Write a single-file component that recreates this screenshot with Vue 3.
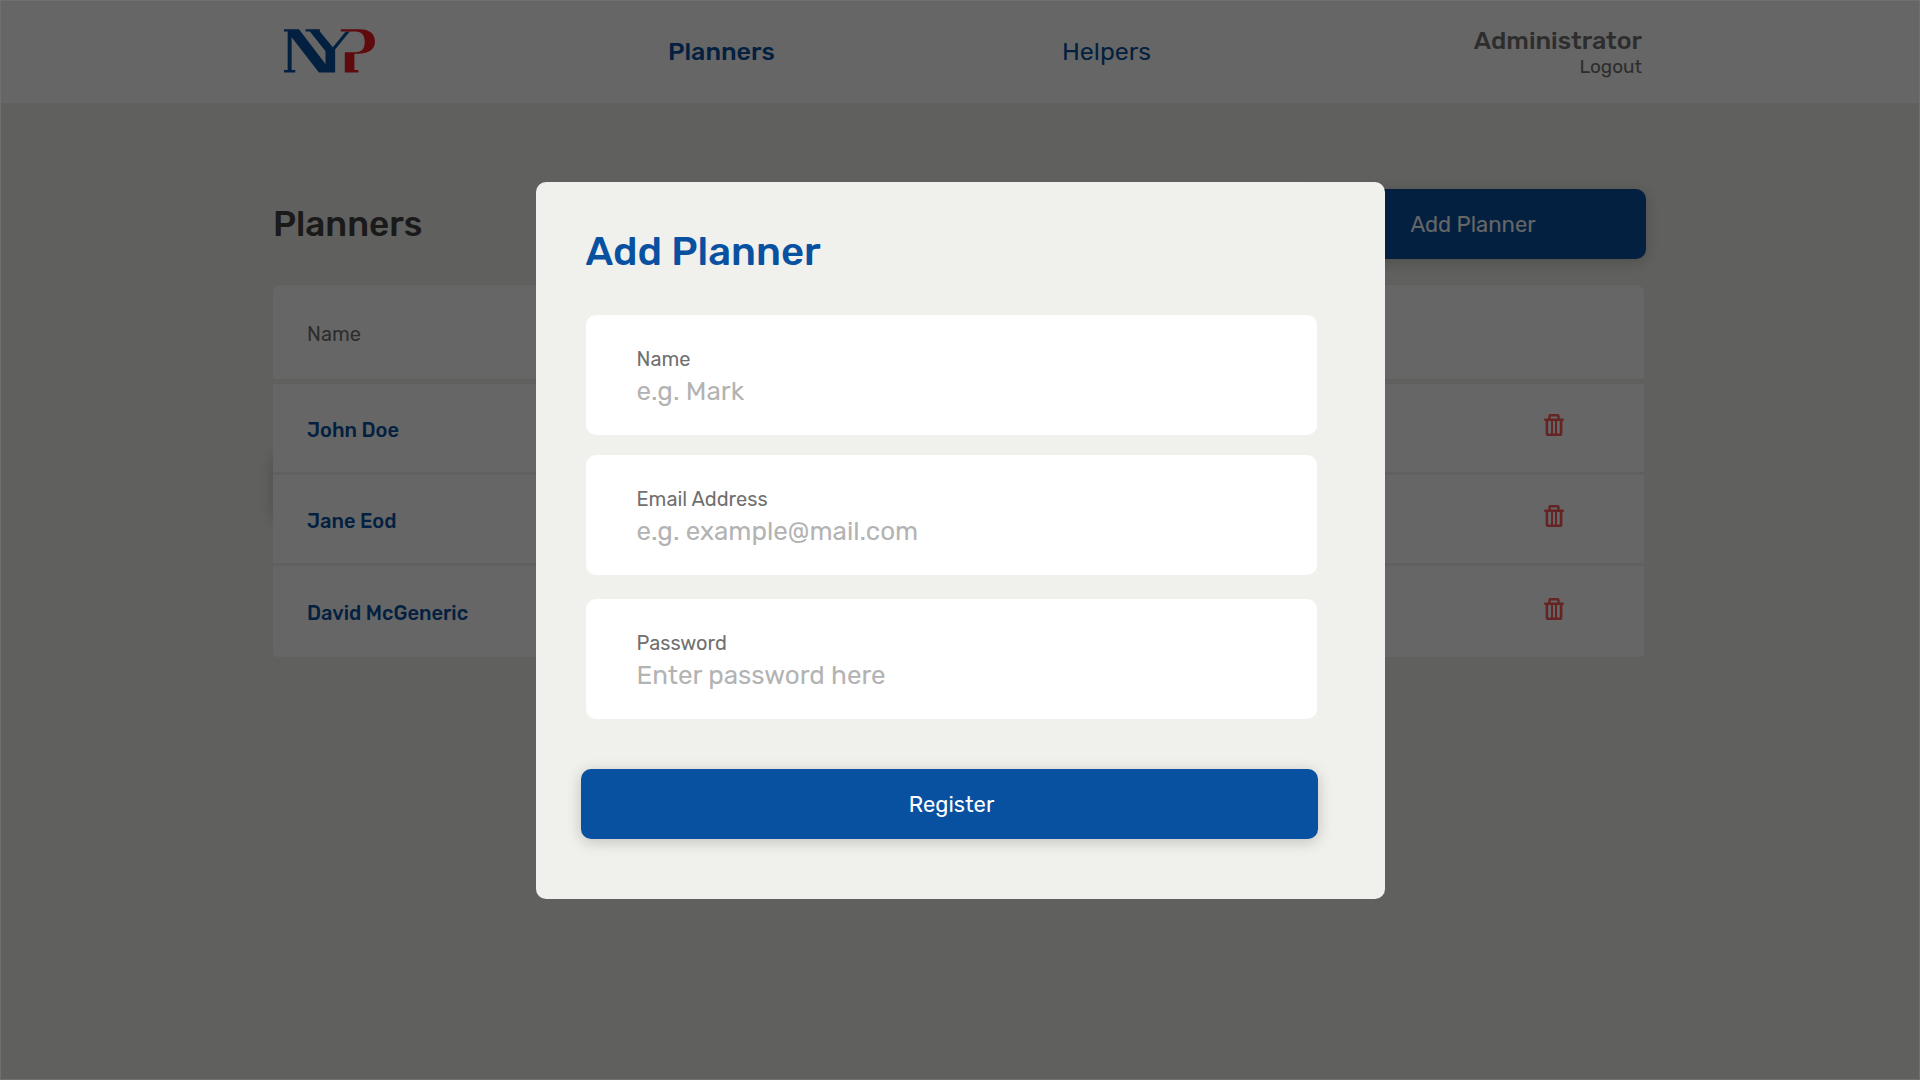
<script setup>
import { reactive } from 'vue'

const planners = ['John Doe', 'Jane Eod', 'David McGeneric']

const fields = [
  { id: 'name', label: 'Name', type: 'text', placeholder: 'e.g. Mark' },
  { id: 'email', label: 'Email Address', type: 'email', placeholder: 'e.g. example@mail.com' },
  { id: 'password', label: 'Password', type: 'password', placeholder: 'Enter password here' },
]

const form = reactive({ name: '', email: '', password: '' })
</script>

<template>
  <div class="page">
    <header class="topbar">
      <div class="container topbar-inner">
        <a class="logo" href="#" aria-label="NYP home">
          <svg viewBox="72 58 274 131" width="91" height="44" aria-hidden="true">
            <path
              fill="#0851a1"
              d="M72 58H117L197 163V124L150 65H137V58H180V65L219 112L258 65H270L226 119V188H177L95 82V181H106V188H72V181H83V65H72Z"
            />
            <path
              fill="#ed1c24"
              d="M243 58H300C330 58 346 72 346 96C346 120 325 132 295 132H284V181H296V188H255V127H288C305 127 315 118 315 96C315 75 305 65 288 65H243Z"
            />
          </svg>
        </a>
        <a class="nav-link active" href="#planners">Planners</a>
        <div class="nav-end">
          <a class="nav-link" href="#helpers">Helpers</a>
          <div class="account">
            <span class="role">Administrator</span>
            <a class="logout" href="#logout">Logout</a>
          </div>
        </div>
      </div>
    </header>

    <main class="container">
      <div class="heading">
        <h1>Planners</h1>
        <button class="primary add" type="button">Add Planner</button>
      </div>

      <div class="table-wrap">
        <table>
          <thead>
            <tr>
              <th scope="col">Name</th>
              <th></th>
            </tr>
          </thead>
          <tbody>
            <tr v-for="planner in planners" :key="planner">
              <td class="name">{{ planner }}</td>
              <td class="actions">
                <button class="delete" type="button" :aria-label="`Delete ${planner}`">
                  <svg viewBox="0 0 20 22" width="20" height="22" fill="none" stroke="currentColor" stroke-width="2.400" aria-hidden="true">
                    <path d="M1.200 5.800H18.800" stroke-linecap="round" />
                    <path d="M5.500 5.500V2.200Q5.500 1.200 6.500 1.200H13.500Q14.500 1.200 14.500 2.200V5.500" />
                    <path d="M2.900 6V19.800Q2.900 20.800 3.900 20.800H16.100Q17.100 20.800 17.100 19.800V6" stroke-width="2.600" />
                    <path d="M8 6V21M12 6V21" stroke-width="2" />
                  </svg>
                </button>
              </td>
            </tr>
          </tbody>
        </table>
      </div>
    </main>

    <div class="overlay">
      <section class="modal" role="dialog" aria-modal="true" aria-labelledby="modal-title">
        <h2 id="modal-title">Add Planner</h2>
        <form @submit.prevent>
          <div v-for="field in fields" :key="field.id" class="field">
            <label :for="field.id">{{ field.label }}</label>
            <input :id="field.id" v-model="form[field.id]" :type="field.type" :placeholder="field.placeholder" />
          </div>
          <button class="primary register" type="submit">Register</button>
        </form>
      </section>
    </div>
  </div>
</template>

<style>
body {
  margin: 0;
  background: #f0f0ec;
}
</style>

<style scoped>
.page {
  min-height: 100vh;
  background: #f0f0ec;
  color: #707070;
  font-family: Rubik, Roboto, sans-serif;
}

.page *,
.page *::before {
  box-sizing: border-box;
}

a {
  color: inherit;
  text-decoration: none;
}

button,
input {
  font-family: inherit;
}

.container {
  width: min(1374px, 100% - 32px);
  margin: 0 auto;
}

.topbar {
  background: #fff;
}

.topbar-inner {
  display: grid;
  grid-template-columns: 384fr 394fr 580fr;
  align-items: center;
  height: 103px;
  padding: 0 5px 0 11px;
}

.logo {
  padding-bottom: 1px;
}

.logo svg {
  display: block;
}

.nav-link {
  color: #0851a1;
  font-size: 25px;
  line-height: 32px;
}

.nav-link.active {
  padding-top: 1px;
  font-weight: 500;
}

.nav-end {
  display: flex;
  align-items: center;
  justify-content: space-between;
}

.account {
  display: flex;
  flex-direction: column;
  align-items: flex-end;
  padding-top: 2px;
}

.role {
  font-size: 25px;
  font-weight: 500;
  line-height: 28px;
}

.logout {
  font-size: 19px;
  line-height: 24px;
}

.heading {
  display: flex;
  align-items: center;
  justify-content: space-between;
  margin: 86px 1px 26px 0;
}

h1 {
  margin: 0;
  color: #434343;
  font-size: 35px;
  font-weight: 500;
  line-height: 44px;
}

.primary {
  width: 100%;
  height: 70px;
  padding: 0;
  border: 0;
  border-radius: 10px;
  background: #0851a1;
  box-shadow: 0 3px 15px rgba(0, 0, 0, 0.2);
  color: #fff;
  font-size: 22px;
}

.add {
  width: 346px;
}

.table-wrap {
  position: relative;
  z-index: 0;
  margin-right: 3px;
}

.table-wrap::before {
  content: '';
  position: absolute;
  z-index: -1;
  top: 165px;
  left: 0;
  width: 346px;
  height: 70px;
  border-radius: 10px;
  box-shadow: 0 3px 15px rgba(0, 0, 0, 0.2);
}

table {
  width: 100%;
  border-spacing: 0;
}

th,
td {
  height: 91px;
  padding: 3px 0 0 34px;
  border-bottom: 3px solid #f0f0f0;
  background: #fff;
  font-size: 20px;
  text-align: left;
}

th {
  height: 99px;
  border-bottom: 5px solid #f0f0ec;
  font-weight: 400;
}

th:first-child {
  border-top-left-radius: 8px;
}

th:last-child {
  border-top-right-radius: 8px;
}

tr:last-child td {
  border-bottom: 0;
}

tr:last-child .name {
  border-bottom-left-radius: 5px;
}

tr:last-child .actions {
  border-bottom-right-radius: 5px;
}

.name {
  color: #0851a1;
  font-weight: 500;
}

.actions {
  padding: 0 80px 1px 0;
  text-align: right;
}

.delete {
  padding: 0;
  border: 0;
  background: none;
  color: #ff5858;
}

.delete svg {
  display: block;
}

.overlay {
  position: fixed;
  z-index: 1;
  inset: 0;
  display: grid;
  place-items: center;
  border: 1px solid #707070;
  background: rgba(0, 0, 0, 0.6);
}

.modal {
  width: min(849px, 100%);
  padding: 46px 67px 60px 45px;
  border-radius: 10px;
  background: #f0f0ec;
}

h2 {
  margin: 0 0 39px 5px;
  color: #0851a1;
  font-size: 40px;
  font-weight: 500;
  line-height: 48px;
}

form {
  display: flex;
  flex-direction: column;
}

.field {
  display: flex;
  flex-direction: column;
  height: 120px;
  margin: 0 1px 20px 5px;
  padding: 32px 51px 0;
  border-radius: 10px;
  background: #fff;
}

.field + .field {
  margin-bottom: 24px;
}

label {
  font-size: 20px;
  line-height: 24px;
}

input {
  width: 100%;
  height: 42px;
  padding: 0;
  border: 0;
  outline: 0;
  background: none;
  color: #707070;
  font-size: 26px;
}

input::placeholder {
  color: #b3b3b3;
  opacity: 1;
}

.register {
  margin-top: 26px;
  padding: 2px 0 0 5px;
}
</style>
